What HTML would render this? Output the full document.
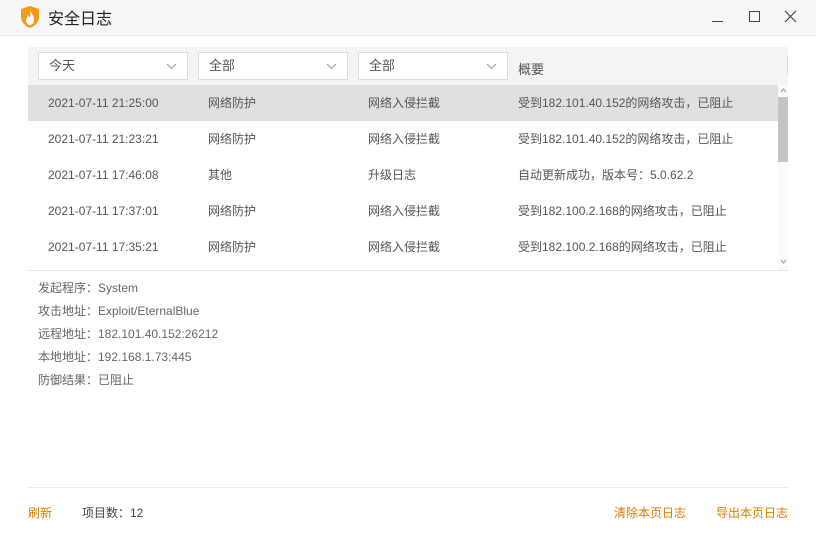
<!DOCTYPE html>
<html><head><meta charset="utf-8"><style>
*{margin:0;padding:0;box-sizing:border-box}
body{width:816px;height:534px;background:#fff;font-family:"Liberation Sans","Noto Sans CJK SC",sans-serif;font-size:12px;color:#555;position:relative;overflow:hidden}
.tb{position:absolute;left:0;top:0;width:816px;height:36px;background:#f7f7f7;border-bottom:1px solid #ececec}
.title{position:absolute;left:48px;top:5px;font-size:16px;color:#222}
.hdr{position:absolute;left:28px;top:47px;width:760px;height:38px;background:#f4f4f4}
.sel{position:absolute;top:5px;width:150px;height:28px;background:#fff;border:1px solid #ddd;padding-left:10px;line-height:26px;font-size:13px;color:#555}
.sel svg{position:absolute;right:10px;top:10px}
.row{position:absolute;left:28px;width:750px;height:36px;line-height:36px;font-size:12px;color:#555}
.row span{position:absolute}
.det{position:absolute;left:38px;font-size:12px;color:#666}
.o{color:#e07a00;position:absolute;top:504px;font-size:12px}
</style></head><body>
<div class="tb">
<svg style="position:absolute;left:20px;top:6px" width="20" height="22" viewBox="0 0 20 22"><path d="M10 0L19 3V11C19 16 15 20 10 22C5 20 1 16 1 11V3Z" fill="#f39a1c"/><path d="M10 5C12 8 14 10 14 14C14 17 12 19 10 19C8 19 6 17 6 14C6 12 8 11 8 9C9 11 10 11 10 11C11 9 10 7 10 5Z" fill="#fff"/></svg>
<div class="title">安全日志</div>
<div style="position:absolute;left:712px;top:21px;width:11px;height:1px;background:#444"></div>
<div style="position:absolute;left:749px;top:11px;width:11px;height:11px;border:1px solid #444"></div>
<svg style="position:absolute;left:784px;top:10px" width="13" height="13"><path d="M1 1L12 12M12 1L1 12" stroke="#444" stroke-width="1.2"/></svg>
</div>
<div class="hdr">
<div class="sel" style="left:10px">今天<svg width="11" height="7"><path d="M1 1L5.5 5.5L10 1" stroke="#999" fill="none"/></svg></div>
<div class="sel" style="left:170px">全部<svg width="11" height="7"><path d="M1 1L5.5 5.5L10 1" stroke="#999" fill="none"/></svg></div>
<div class="sel" style="left:330px">全部<svg width="11" height="7"><path d="M1 1L5.5 5.5L10 1" stroke="#999" fill="none"/></svg></div>
<div style="position:absolute;left:490px;top:12px;font-size:13px;color:#555">概要</div>
<div style="position:absolute;left:759px;top:8px;width:1px;height:20px;background:#ddd"></div>
</div>
<div class="row" style="top:85px;background:#e0e0e0"><span style="left:20px">2021-07-11 21:25:00</span><span style="left:180px">网络防护</span><span style="left:340px">网络入侵拦截</span><span style="left:490px">受到182.101.40.152的网络攻击，已阻止</span></div>
<div class="row" style="top:121px"><span style="left:20px">2021-07-11 21:23:21</span><span style="left:180px">网络防护</span><span style="left:340px">网络入侵拦截</span><span style="left:490px">受到182.101.40.152的网络攻击，已阻止</span></div>
<div class="row" style="top:157px"><span style="left:20px">2021-07-11 17:46:08</span><span style="left:180px">其他</span><span style="left:340px">升级日志</span><span style="left:490px">自动更新成功，版本号：5.0.62.2</span></div>
<div class="row" style="top:193px"><span style="left:20px">2021-07-11 17:37:01</span><span style="left:180px">网络防护</span><span style="left:340px">网络入侵拦截</span><span style="left:490px">受到182.100.2.168的网络攻击，已阻止</span></div>
<div class="row" style="top:229px"><span style="left:20px">2021-07-11 17:35:21</span><span style="left:180px">网络防护</span><span style="left:340px">网络入侵拦截</span><span style="left:490px">受到182.100.2.168的网络攻击，已阻止</span></div>
<div style="position:absolute;left:778px;top:85px;width:10px;height:185px;background:#fafafa"></div>
<div style="position:absolute;left:778px;top:97px;width:10px;height:65px;background:#c4c4c4"></div>
<svg style="position:absolute;left:780px;top:88px" width="7" height="5"><path d="M1 4L3.5 1L6 4" stroke="#999" fill="none"/></svg>
<svg style="position:absolute;left:780px;top:259px" width="7" height="5"><path d="M1 1L3.5 4L6 1" stroke="#999" fill="none"/></svg>
<div style="position:absolute;left:28px;top:270px;width:760px;height:1px;background:#e6e6e6"></div>
<div class="det" style="top:279px">发起程序：System</div>
<div class="det" style="top:302px">攻击地址：Exploit/EternalBlue</div>
<div class="det" style="top:325px">远程地址：182.101.40.152:26212</div>
<div class="det" style="top:348px">本地地址：192.168.1.73:445</div>
<div class="det" style="top:371px">防御结果：已阻止</div>
<div style="position:absolute;left:28px;top:487px;width:760px;height:1px;background:#ececec"></div>
<div class="o" style="left:28px">刷新</div>
<div style="position:absolute;left:82px;top:504px;color:#444">项目数：12</div>
<div class="o" style="left:614px">清除本页日志</div>
<div class="o" style="left:716px">导出本页日志</div>
</body></html>
